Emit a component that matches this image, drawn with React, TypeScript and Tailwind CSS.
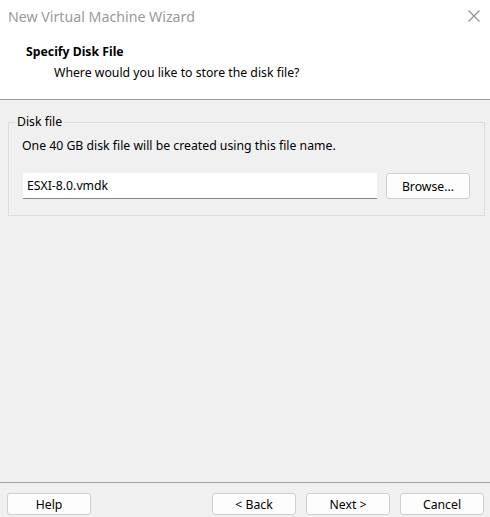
import React from "react";

const font = { fontFamily: '"Noto Sans", "Segoe UI", sans-serif' };

function Btn({ label, className = "" }: { label: string; className?: string }) {
  return (
    <button
      className={`w-[84px] h-[22px] rounded-[3px] border border-[#d0d0d0] bg-[#fdfdfd] text-[12.25px] text-black leading-none flex items-center justify-center pt-[2px] ${className}`}
    >
      {label}
    </button>
  );
}

export default function App() {
  return (
    <div
      className="w-[490px] h-[517px] flex flex-col bg-[#f0f0f0] text-black text-[12.25px] overflow-hidden"
      style={font}
    >
      {/* title bar */}
      <div className="h-[32px] bg-white flex items-center justify-between pl-[8px] pr-[10px] shrink-0">
        <span className="text-[14.2px] text-[#9a9a9a] leading-none pt-[2px]">New Virtual Machine Wizard</span>
        <svg width="12" height="12" viewBox="0 0 12 12">
          <path d="M0.5 0.5 L11.5 11.5 M11.5 0.5 L0.5 11.5" stroke="#8f8f8f" strokeWidth="1.1" fill="none" />
        </svg>
      </div>

      {/* header */}
      <div className="h-[68px] bg-white border-b border-[#a0a0a0] pt-[12px] shrink-0">
        <div className="pl-[26px] font-bold leading-[16px]">Specify Disk File</div>
        <div className="pl-[54px] mt-[5px] leading-[16px]">Where would you like to store the disk file?</div>
      </div>

      {/* body */}
      <div className="flex-1 pt-[22px]">
        <div className="relative ml-[8px] w-[477px] h-[94px] border border-[#dcdcdc]">
          <span className="absolute left-[6px] -top-[9px] px-[2px] bg-[#f0f0f0] leading-[16px]">Disk file</span>
          <div className="pl-[13px] pt-[15px] leading-[16px]">One 40 GB disk file will be created using this file name.</div>
          <div className="flex items-center pl-[14px] mt-[19px] gap-[9px]">
            <div className="w-[354px] h-[26px] bg-white border-b border-[#868686] flex items-center pl-[4px] pt-[1px]">
              ESXI-8.0.vmdk
            </div>
            <Btn label="Browse..." className="h-[26px] pt-[3px]" />
          </div>
        </div>
      </div>

      {/* footer */}
      <div className="h-[35px] border-t border-[#a0a0a0] shrink-0 flex items-start pt-[10px] pl-[7px]">
        <Btn label="Help" />
        <div className="flex gap-[10px] ml-[121px]">
          <Btn label="< Back" />
          <Btn label="Next >" />
          <Btn label="Cancel" />
        </div>
      </div>
    </div>
  );
}
